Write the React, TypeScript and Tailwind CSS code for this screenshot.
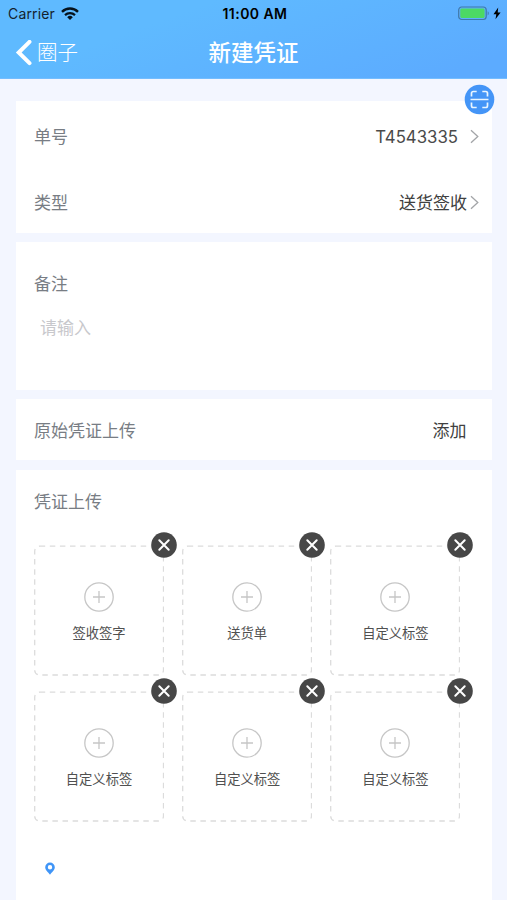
import React from "react";

const uploads = ["签收签字", "送货单", "自定义标签", "自定义标签", "自定义标签", "自定义标签"];

const StatusBar: React.FC = () => (
  <div className="grid h-[27px] grid-cols-3 items-center pr-[6px] pl-[8px] text-black">
    <div className="flex items-center">
      <span className="text-[14px] leading-[20px] tracking-[0.15px] text-[#14222e]">Carrier</span>
      <svg width="18" height="14" viewBox="0 0 18 14" className="ml-[6px]" fill="none" stroke="#06121c">
        <path d="M1 4.800a11.400 11.400 0 0 1 16 0" strokeWidth="2.4" />
        <path d="M4 8.100a7.200 7.200 0 0 1 10 0" strokeWidth="2.2" />
        <path d="M6.200 10.200a4 4 0 0 1 5.600 0L9 13z" fill="#06121c" stroke="none" />
      </svg>
    </div>
    <span className="pl-px text-center text-[14px] leading-[20px] font-semibold tracking-[0.45px] whitespace-nowrap">11:00 AM</span>
    <div className="flex items-center justify-end">
      <svg width="32" height="15" viewBox="0 0 32 15">
        <rect x="0.7" y="1" width="27.500" height="12.500" rx="3" fill="none" stroke="#3f78a8" strokeWidth="1.2" />
        <rect x="2.300" y="2.500" width="24.300" height="9.500" rx="1.400" fill="#4cd964" />
        <path d="M29.700 5.200c1.400.6 1.400 3.600 0 4.200z" fill="#3f78a8" />
      </svg>
      <svg width="8" height="13" viewBox="0 0 8 13" className="ml-[3px]">
        <path d="M5.200.5.500 7.200h2.800L2.500 12.200 7.600 5.400H4.700z" fill="#000" />
      </svg>
    </div>
  </div>
);

const Header: React.FC = () => (
  <header className="h-[79px] border-b border-[#74bdff] bg-[linear-gradient(160deg,#5fbaff_30%,#5cabff_90%)]">
    <StatusBar />
    <div className="grid h-[51px] grid-cols-3 items-center text-white">
      <button aria-label="返回圈子" className="flex items-center pl-[15px]">
        <svg width="17" height="26" viewBox="0 0 17 26" fill="none" stroke="currentColor" strokeWidth="4" strokeLinecap="round" strokeLinejoin="miter">
          <path d="M14.500 1.800 3.700 12.500 14.500 23.200" />
        </svg>
        <span className="ml-[5px] text-[20.5px] leading-[30px] font-light">圈子</span>
      </button>
      <h1 className="pt-px text-center text-[22.5px] leading-[30px] font-medium">新建凭证</h1>
    </div>
  </header>
);

const Arrow: React.FC = () => (
  <svg width="9" height="15" viewBox="0 0 9 15" fill="none" stroke="#a3a5a8" strokeWidth="1.3">
    <path d="M1 1.200 7.800 7.500 1 13.800" />
  </svg>
);

const ScanButton: React.FC = () => (
  <button aria-label="扫描" className="absolute -top-[17px] -right-[3px] flex size-[31px] items-center justify-center">
    <svg width="31" height="31" viewBox="0 0 31 31" fill="none" stroke="#e9f5ff" strokeWidth="1.7">
      <circle cx="15.500" cy="15.500" r="14.800" fill="#4495f7" stroke="none" />
      <path d="M7.500 12.500V9.200a1.700 1.700 0 0 1 1.700-1.700h3.500M18.300 7.500h3.500a1.700 1.700 0 0 1 1.700 1.700v3.300M23.500 18.500v3.300a1.700 1.700 0 0 1-1.700 1.700h-3.500M12.700 23.500H9.200a1.700 1.700 0 0 1-1.700-1.700v-3.300" />
      <path d="M6.500 15.500h18" strokeWidth="1.5" />
    </svg>
  </button>
);

const UploadTile: React.FC<{ label: string }> = ({ label }) => (
  <div className="relative flex h-[131px] w-[130px] flex-col items-center pt-[37px]">
    <svg width="130" height="131" viewBox="0 0 130 131" className="absolute inset-0" fill="none">
      <rect x="0.7" y="1.200" width="128.800" height="128.800" rx="5" stroke="#dcdcdc" strokeWidth="1.3" strokeDasharray="5.5 4.6" />
    </svg>
    <svg width="30" height="30" viewBox="0 0 30 30" fill="none" stroke="#c6c6c6" strokeWidth="1.3">
      <circle cx="15" cy="15" r="14.200" />
      <path d="M9 15h12M15 9v12" />
    </svg>
    <span className="mt-[10.5px] text-[13.3px] leading-[20px] text-[#505050]">{label}</span>
    <button aria-label="删除" className="absolute -top-[13px] -right-[13px] size-[26px]">
      <svg width="26" height="26" viewBox="0 0 26 26" fill="none" stroke="#fff" strokeWidth="2" strokeLinecap="round">
        <circle cx="13" cy="13" r="12.800" fill="#474747" stroke="none" />
        <path d="m8.300 8.300 9.400 9.400M17.700 8.300l-9.400 9.400" />
      </svg>
    </button>
  </div>
);

const App: React.FC = () => {
  return (
    <div className="flex h-[900px] w-full flex-col overflow-hidden bg-[#f3f6ff] font-[Inter,'Noto_Sans_CJK_SC',sans-serif] text-[17px] leading-[24px] text-[#787d84]">
      <Header />
      <main className="flex grow flex-col pt-[22px] pr-[15px] pl-[16px]">
        <section className="relative h-[132px] shrink-0 bg-white pr-[13px] pl-[18px]">
          <ScanButton />
          <div className="flex h-[71px] items-center justify-between">
            <span className="pt-px">单号</span>
            <div className="flex items-center gap-[12px] text-[#4a4a4a]">
              <span className="text-[16.8px]">T4543335</span>
              <Arrow />
            </div>
          </div>
          <div className="flex h-[61px] items-center justify-between">
            <span className="pt-px">类型</span>
            <div className="flex items-center gap-[3px] text-[#404040]">
              <span className="pt-px">送货签收</span>
              <Arrow />
            </div>
          </div>
        </section>

        <section className="mt-[9px] h-[148px] shrink-0 bg-white px-[18px] pt-[30px]">
          <div>备注</div>
          <div className="mt-[20px] pl-[6px] text-[#c8c8cc]">请输入</div>
        </section>

        <section className="mt-[9px] flex h-[61px] shrink-0 items-center justify-between bg-white pt-[2px] pr-[25.5px] pl-[18px]">
          <span>原始凭证上传</span>
          <span className="text-[#404040]">添加</span>
        </section>

        <section className="mt-[10px] grow bg-white pt-[20px] pl-[18px]">
          <div>凭证上传</div>
          <div className="mt-[31px] grid grid-cols-[130px_130px_130px] gap-x-[18.2px] gap-y-[15px]">
            {uploads.map((label, i) => (
              <UploadTile key={i} label={label} />
            ))}
          </div>
          <svg width="10" height="13" viewBox="0 0 10 13" className="mt-[40px] ml-[11px]">
            <path fillRule="evenodd" d="M5 .5A4.800 4.800 0 0 0 .2 5.300C.2 8.300 3 10 5 12.700 7 10 9.800 8.300 9.800 5.300A4.800 4.800 0 0 0 5 .5Zm0 2.500a2.200 2.200 0 1 1 0 4.400 2.200 2.200 0 0 1 0-4.400Z" fill="#4095f7" />
          </svg>
        </section>
      </main>
    </div>
  );
};

export default App;
